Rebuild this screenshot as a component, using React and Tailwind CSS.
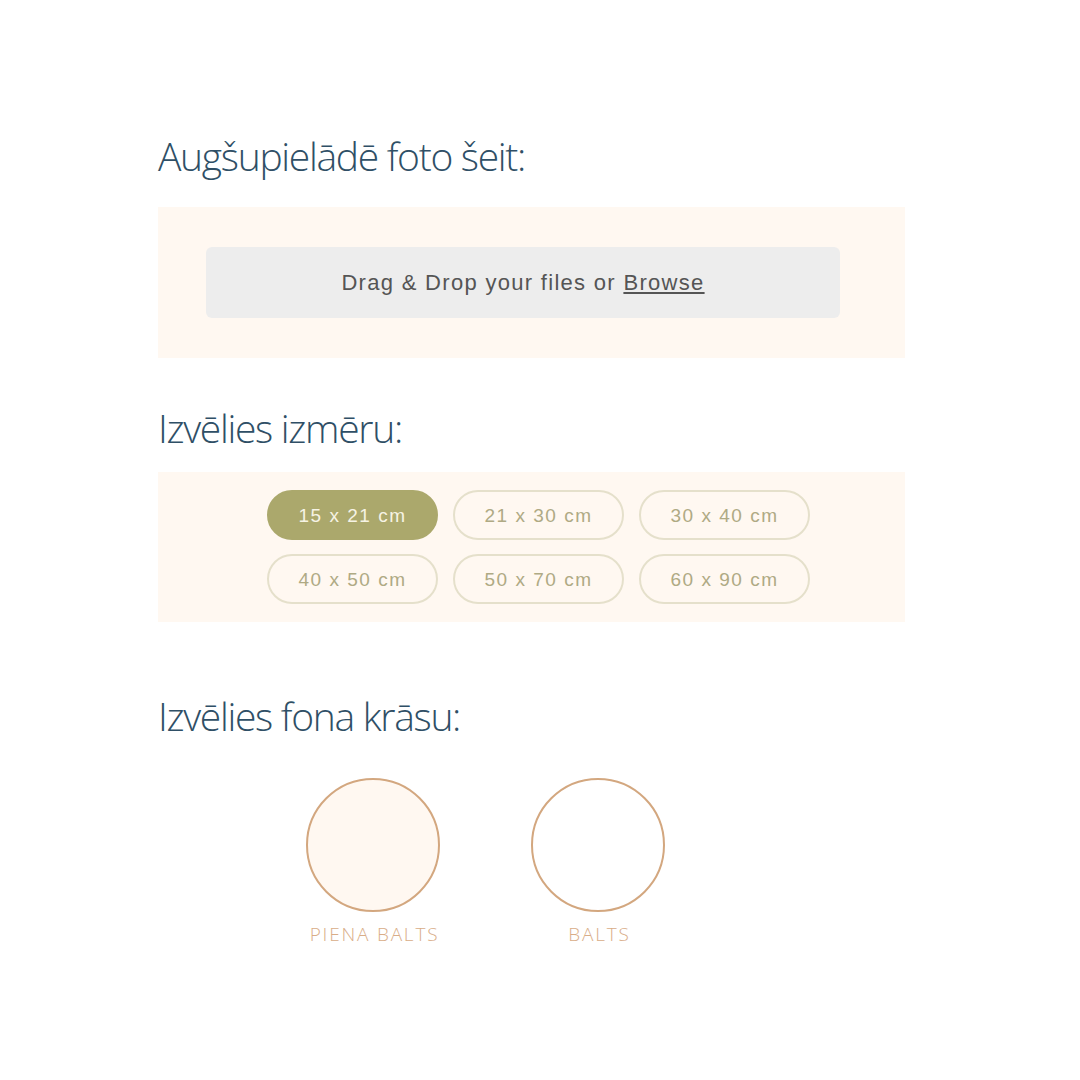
import { useState } from "react";

const sizes = ["15 x 21 cm", "21 x 30 cm", "30 x 40 cm", "40 x 50 cm", "50 x 70 cm", "60 x 90 cm"];

const colors = [
  { name: "PIENA BALTS", fill: "bg-[#fff8f1]" },
  { name: "BALTS", fill: "bg-white" },
];

const App = () => {
  const [size, setSize] = useState(sizes[0]);
  const [color, setColor] = useState(null);

  const heading = "text-[39px] leading-[40px] font-light text-[#2f4f66] font-['Open_Sans',sans-serif] tracking-[-1.3px]";

  return (
    <div className="min-h-[1080px] w-[1080px] bg-white pl-[158px] pt-[136px]">
      {/* Upload */}
      <h2 className={heading}>Augšupielādē foto šeit:</h2>
      <div className="mt-[31px] h-[151px] w-[747px] bg-[#fff8f1] pt-[40px] pl-[48px]">
        <div className="flex h-[71px] w-[634px] items-center justify-center rounded-md bg-[#ededed] text-[22px] tracking-[1.3px] text-[#555555] font-['Liberation_Sans',sans-serif]">
          <span>
            Drag &amp; Drop your files or <span className="underline underline-offset-2 cursor-pointer">Browse</span>
          </span>
        </div>
      </div>

      {/* Size */}
      <h2 className={`${heading} mt-[50px]`}>Izvēlies izmēru:</h2>
      <div className="mt-[24px] h-[150px] w-[747px] bg-[#fff8f1] pt-[18px] pl-[109px]">
        <div className="grid w-[543px] grid-cols-3 gap-x-[15px] gap-y-[14px]">
          {sizes.map((s) => (
            <button
              key={s}
              onClick={() => setSize(s)}
              className={`h-[50px] rounded-full border-2 pt-[3px] text-[19px] tracking-[1.5px] font-['Liberation_Sans',sans-serif] ${
                size === s
                  ? "border-[#aba86c] bg-[#aba86c] text-[#f6f3e4]"
                  : "border-[#e5e0cb] text-[#afaa84]"
              }`}
            >
              {s}
            </button>
          ))}
        </div>
      </div>

      {/* Colour */}
      <h2 className={`${heading} mt-[74px]`}>Izvēlies fona krāsu:</h2>
      <div className="mt-[42px] ml-[148px] flex gap-[91px]">
        {colors.map((c) => (
          <button key={c.name} onClick={() => setColor(c.name)} className="flex w-[134px] flex-col items-center">
            <span className={`h-[134px] w-[134px] rounded-full border-2 border-[#d3a77f] ${c.fill}`}></span>
            <span className="mt-[8px] ml-[3px] whitespace-nowrap text-[19px] font-light tracking-[1.8px] text-[#d9ad88] font-['Open_Sans',sans-serif]">
              {c.name}
            </span>
          </button>
        ))}
      </div>
    </div>
  );
};

export default App;
